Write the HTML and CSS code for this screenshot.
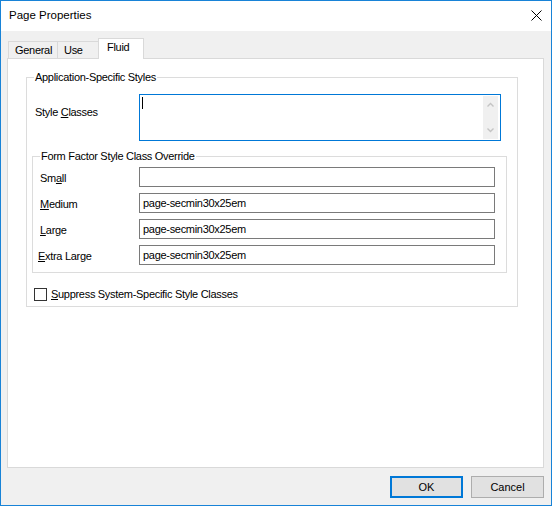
FILE: index.html
```html
<!DOCTYPE html>
<html>
<head>
<meta charset="utf-8">
<title>Page Properties</title>
<link rel="stylesheet" href="styles.css">
</head>
<body>
<div class="window">
  <div class="titlebar">
    <span class="title">Page Properties</span>
    <svg class="close" width="11" height="11" viewBox="0 0 11 11">
      <path d="M0.5 0.5 L10.5 10.5 M10.5 0.5 L0.5 10.5" stroke="#000" stroke-width="1" fill="none"/>
    </svg>
  </div>
  <div class="client">
    <div class="tabs">
      <div class="tab tab-general">General</div>
      <div class="tab tab-use">Use</div>
      <div class="tab tab-active">Fluid</div>
    </div>
    <div class="panel">
      <fieldset class="group group-app">
        <legend>Application-Specific Styles</legend>
        <div class="style-row">
          <label class="style-label">Style <u>C</u>lasses</label>
          <div class="textarea">
            <span class="caret"></span>
            <div class="vscroll">
              <svg width="15" height="43" viewBox="0 0 15 43">
                <path d="M4.5 10.5 L7.5 7.5 L10.5 10.5" stroke="#c4c4c4" stroke-width="1.4" fill="none"/>
                <path d="M4.5 32.5 L7.5 35.5 L10.5 32.5" stroke="#c4c4c4" stroke-width="1.4" fill="none"/>
              </svg>
            </div>
          </div>
        </div>
        <fieldset class="group group-ff">
          <legend>Form Factor Style Class Override</legend>
          <div class="ff-grid">
            <label class="ff-label">Sm<u>a</u>ll</label>
            <div class="field"></div>
            <label class="ff-label"><u>M</u>edium</label>
            <div class="field">page-secmin30x25em</div>
            <label class="ff-label"><u>L</u>arge</label>
            <div class="field">page-secmin30x25em</div>
            <label class="ff-label ff-label-xl"><u>E</u>xtra Large</label>
            <div class="field">page-secmin30x25em</div>
          </div>
        </fieldset>
        <div class="check-row">
          <span class="checkbox"></span>
          <span class="check-label"><u>S</u>uppress System-Specific Style Classes</span>
        </div>
      </fieldset>
    </div>
    <div class="buttons">
      <div class="btn btn-default">OK</div>
      <div class="btn">Cancel</div>
    </div>
  </div>
</div>
</body>
</html>
```

FILE: styles.css
```css
html, body {
  margin: 0;
  padding: 0;
  background: #ffffff;
}

body {
  font-family: "Liberation Sans", Arial, sans-serif;
  font-size: 11px;
  letter-spacing: -0.3px;
  color: #000;
}

.window {
  width: 552px;
  height: 506px;
  box-sizing: border-box;
  border: 1px solid #1883d7;
  display: flex;
  flex-direction: column;
  background: #f0f0f0;
}

.titlebar {
  height: 30px;
  flex: none;
  background: #ffffff;
  display: flex;
  align-items: flex-start;
}

.title {
  font-size: 11.5px;
  letter-spacing: 0;
  line-height: 14px;
  margin-top: 7px;
  padding-left: 8px;
}

.close {
  display: block;
  margin-left: auto;
  margin-right: 9px;
  margin-top: 9px;
}

.client {
  flex: 1;
  display: flex;
  flex-direction: column;
  padding: 7px 7px 0 6px;
  background: #f0f0f0;
}

.tabs {
  position: relative;
  z-index: 1;
  display: flex;
  align-items: flex-end;
  height: 21px;
  margin-bottom: -1px;
  padding-left: 1px;
}

.tab {
  box-sizing: border-box;
  height: 17px;
  margin-bottom: 1px;
  border: 1px solid #d9d9d9;
  border-bottom: none;
  background: #f0f0f0;
  line-height: 16px;
  padding-left: 6px;
  white-space: nowrap;
}

.tab-general {
  width: 50px;
}

.tab-use {
  width: 40px;
  border-left: none;
  border-right: none;
  padding-left: 6px;
}

.tab-active {
  width: 46px;
  height: 21px;
  margin-bottom: 0;
  background: #ffffff;
  padding-left: 8px;
  line-height: 17px;
}

.panel {
  height: 410px;
  box-sizing: border-box;
  border: 1px solid #d9d9d9;
  background: #ffffff;
}

.group {
  border: 1px solid #dcdcdc;
  margin: 0;
  padding: 0;
  min-inline-size: auto;
  box-sizing: border-box;
}

.group legend {
  padding: 0 1px;
  margin-left: 7px;
  line-height: 13px;
}

.group-app {
  width: 492px;
  margin: 12px 0 0 18px;
  padding-bottom: 5px;
}

.style-row {
  display: flex;
  align-items: flex-start;
  margin-top: 10px;
  padding-left: 8px;
}

.style-label {
  width: 104px;
  flex: none;
  line-height: 13px;
  margin-top: 12px;
}

.textarea {
  width: 362px;
  height: 47px;
  box-sizing: border-box;
  border: 1px solid #0078d7;
  background: #fff;
  display: flex;
  align-items: flex-start;
  padding: 1px 2px 1px 2px;
}

.caret {
  display: block;
  width: 1px;
  height: 12px;
  margin-top: 1px;
  background: #000;
}

.vscroll {
  margin-left: auto;
  width: 15px;
  height: 43px;
  background: #f0f0f0;
}

.vscroll svg {
  display: block;
}

.group-ff {
  width: 475px;
  margin: 9px 0 0 5px;
  padding: 4px 0 7px 7px;
}

.group-ff legend {
  margin-left: 0;
}

.ff-grid {
  display: grid;
  grid-template-columns: 99px 356px;
  grid-auto-rows: 20px;
  row-gap: 6px;
  align-items: center;
}

.ff-label {
  line-height: 13px;
  margin-top: 2px;
}

.ff-label-xl {
  margin-left: -2px;
}

.field {
  height: 20px;
  box-sizing: border-box;
  border: 1px solid #7a7a7a;
  background: #fff;
  padding-left: 3px;
  line-height: 18px;
  white-space: nowrap;
}

.check-row {
  display: flex;
  align-items: center;
  margin-top: 15px;
  padding-left: 7px;
  height: 13px;
}

.checkbox {
  width: 13px;
  height: 13px;
  box-sizing: border-box;
  border: 1px solid #333333;
  background: #fff;
  flex: none;
}

.check-label {
  margin-left: 4px;
  line-height: 13px;
}

.buttons {
  display: flex;
  justify-content: flex-end;
  gap: 8px;
  margin-top: 8px;
}

.btn {
  width: 73px;
  height: 22px;
  box-sizing: border-box;
  border: 1px solid #adadad;
  background: #e1e1e1;
  display: flex;
  align-items: center;
  justify-content: center;
  letter-spacing: 0;
}

.btn-default {
  border: 2px solid #0078d7;
}
```
